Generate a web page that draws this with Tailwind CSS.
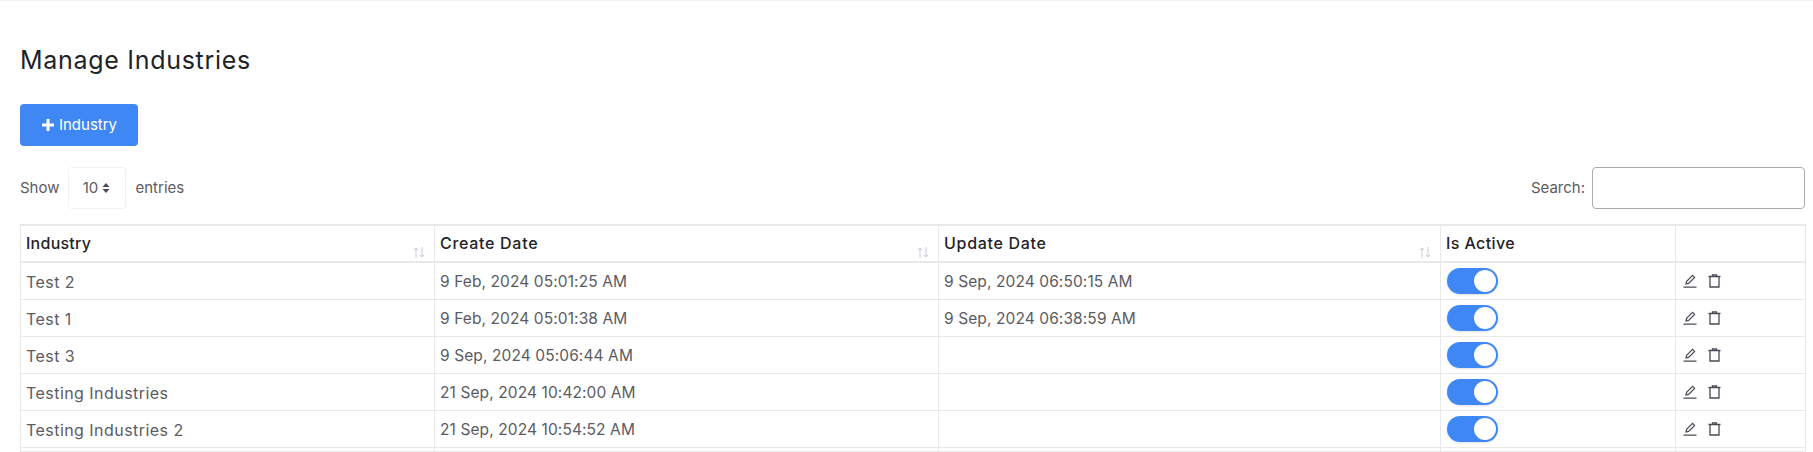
<!DOCTYPE html>
<html lang="en">
<head>
  <meta charset="UTF-8" />
  <title>Manage Industries</title>
  <script src="https://cdn.jsdelivr.net/npm/@tailwindcss/browser@4"></script>
</head>
<body class="bg-white h-[452px] overflow-hidden font-['Inter',sans-serif] text-[15px] text-[#5b5b63]">
  <div class="h-px bg-[#eef2f7]"></div>
  <div class="pl-5 pr-2">
    <!-- Title -->
    <h1 class="pt-[44px] h-[103px] text-[25px] leading-[30px] tracking-[0.7px] font-normal text-[#1f2328]">Manage Industries</h1>

    <button class="flex items-center justify-center gap-1 w-[118px] h-[42px] rounded bg-[#4087f6] text-white text-[15px]">
      <svg width="14" height="14" viewBox="0 0 14 14"><path d="M7 1v12M1 7h12" stroke="#fff" stroke-width="3"/></svg>
      Industry
    </button>

    <!-- Table controls -->
    <div class="flex justify-between items-center mt-[21px] h-[42px]">
      <div class="flex items-center">
        <span>Show</span>
        <div class="flex items-center justify-center gap-1 w-[58px] h-[42px] ml-[8px] mr-[10px] border border-[#eef2f7] rounded text-[15px]">
          10
          <svg width="8" height="10" viewBox="0 0 8 10"><path d="M4 0l3.5 4h-7zM4 10l3.5-4h-7z" fill="#4a4a52"/></svg>
        </div>
        <span>entries</span>
      </div>
      <div class="flex items-center">
        <span class="mr-[7px]">Search:</span>
        <input type="text" class="w-[213px] h-[42px] border border-[#aaaaaa] rounded bg-white" />
      </div>
    </div>

    <!-- Table -->
    <table class="mt-[15px] w-[1785px] table-fixed border-collapse border border-[#e9e9ea]">
      <colgroup>
        <col class="w-[414px]" /><col class="w-[504px]" /><col class="w-[502px]" /><col class="w-[235px]" /><col class="w-[130px]" />
      </colgroup>
      <thead>
        <tr class="h-[37px] text-[16px] text-[#1f2328] text-left">
          <th class="relative px-[5px] pb-[2px] tracking-[0.25px] font-medium border border-[#e9e9ea] border-t-2 border-b-2">Industry
            <svg class="absolute right-[9px] bottom-[3px]" width="12" height="11" viewBox="0 0 12 11"><path d="M3 11V1M1 3l2-2 2 2M9 0v10M7 8l2 2 2-2" stroke="#c5cad3" fill="none"/></svg>
          </th>
          <th class="relative px-[5px] pb-[2px] tracking-[0.7px] font-medium border border-[#e9e9ea] border-t-2 border-b-2">Create Date
            <svg class="absolute right-[9px] bottom-[3px]" width="12" height="11" viewBox="0 0 12 11"><path d="M3 11V1M1 3l2-2 2 2M9 0v10M7 8l2 2 2-2" stroke="#c5cad3" fill="none"/></svg>
          </th>
          <th class="relative px-[5px] pb-[2px] tracking-[0.7px] font-medium border border-[#e9e9ea] border-t-2 border-b-2">Update Date
            <svg class="absolute right-[9px] bottom-[3px]" width="12" height="11" viewBox="0 0 12 11"><path d="M3 11V1M1 3l2-2 2 2M9 0v10M7 8l2 2 2-2" stroke="#c5cad3" fill="none"/></svg>
          </th>
          <th class="px-[5px] pb-[2px] tracking-[0.4px] font-medium border border-[#e9e9ea] border-t-2 border-b-2">Is Active</th>
          <th class="border border-[#e9e9ea] border-t-2 border-b-2"></th>
        </tr>
      </thead>
      <tbody>
        <tr class="h-[37px]">
          <td class="px-[5px] pt-[2px] text-[16px] tracking-[0.45px] border border-[#e9e9ea]">Test 2</td>
          <td class="px-[5px] pt-[2px] text-[15.5px] tracking-[0.1px] border border-[#e9e9ea]">9 Feb, 2024 05:01:25 AM</td>
          <td class="px-[5px] pt-[2px] text-[15.5px] tracking-[0.1px] border border-[#e9e9ea]">9 Sep, 2024 06:50:15 AM</td>
          <td class="px-[6px] border border-[#e9e9ea]"><div class="flex justify-end items-center w-[51px] h-[26px] p-[2px] rounded-full bg-[#4087f6] shadow-sm"><div class="w-[22px] h-[22px] rounded-full bg-white"></div></div></td>
          <td class="px-[7px] border border-[#e9e9ea]"><div class="flex items-center gap-[11px]">
            <svg width="14" height="14" viewBox="0 0 14 14" fill="none" stroke="#4a4a55" stroke-width="1.2"><path d="M3 10l.6-2.6L9.6 1.4l2 2-6 6zM.5 13.2h13"/></svg>
            <svg width="13" height="14" viewBox="0 0 13 14" fill="none" stroke="#4a4a55" stroke-width="1.3"><path d="M.5 2.5h12M2 2.5V13h9V2.5M4.5 2.5V.8h4v1.7"/></svg>
          </div></td>
        </tr>
        <tr class="h-[37px]">
          <td class="px-[5px] pt-[2px] text-[16px] tracking-[0.45px] border border-[#e9e9ea]">Test 1</td>
          <td class="px-[5px] pt-[2px] text-[15.5px] tracking-[0.1px] border border-[#e9e9ea]">9 Feb, 2024 05:01:38 AM</td>
          <td class="px-[5px] pt-[2px] text-[15.5px] tracking-[0.1px] border border-[#e9e9ea]">9 Sep, 2024 06:38:59 AM</td>
          <td class="px-[6px] border border-[#e9e9ea]"><div class="flex justify-end items-center w-[51px] h-[26px] p-[2px] rounded-full bg-[#4087f6] shadow-sm"><div class="w-[22px] h-[22px] rounded-full bg-white"></div></div></td>
          <td class="px-[7px] border border-[#e9e9ea]"><div class="flex items-center gap-[11px]">
            <svg width="14" height="14" viewBox="0 0 14 14" fill="none" stroke="#4a4a55" stroke-width="1.2"><path d="M3 10l.6-2.6L9.6 1.4l2 2-6 6zM.5 13.2h13"/></svg>
            <svg width="13" height="14" viewBox="0 0 13 14" fill="none" stroke="#4a4a55" stroke-width="1.3"><path d="M.5 2.5h12M2 2.5V13h9V2.5M4.5 2.5V.8h4v1.7"/></svg>
          </div></td>
        </tr>
        <tr class="h-[37px]">
          <td class="px-[5px] pt-[2px] text-[16px] tracking-[0.45px] border border-[#e9e9ea]">Test 3</td>
          <td class="px-[5px] pt-[2px] text-[15.5px] tracking-[0.1px] border border-[#e9e9ea]">9 Sep, 2024 05:06:44 AM</td>
          <td class="px-[5px] border border-[#e9e9ea]"></td>
          <td class="px-[6px] border border-[#e9e9ea]"><div class="flex justify-end items-center w-[51px] h-[26px] p-[2px] rounded-full bg-[#4087f6] shadow-sm"><div class="w-[22px] h-[22px] rounded-full bg-white"></div></div></td>
          <td class="px-[7px] border border-[#e9e9ea]"><div class="flex items-center gap-[11px]">
            <svg width="14" height="14" viewBox="0 0 14 14" fill="none" stroke="#4a4a55" stroke-width="1.2"><path d="M3 10l.6-2.6L9.6 1.4l2 2-6 6zM.5 13.2h13"/></svg>
            <svg width="13" height="14" viewBox="0 0 13 14" fill="none" stroke="#4a4a55" stroke-width="1.3"><path d="M.5 2.5h12M2 2.5V13h9V2.5M4.5 2.5V.8h4v1.7"/></svg>
          </div></td>
        </tr>
        <tr class="h-[37px]">
          <td class="px-[5px] pt-[2px] text-[16px] tracking-[0.45px] border border-[#e9e9ea]">Testing Industries</td>
          <td class="px-[5px] pt-[2px] text-[15.5px] tracking-[0.1px] border border-[#e9e9ea]">21 Sep, 2024 10:42:00 AM</td>
          <td class="px-[5px] border border-[#e9e9ea]"></td>
          <td class="px-[6px] border border-[#e9e9ea]"><div class="flex justify-end items-center w-[51px] h-[26px] p-[2px] rounded-full bg-[#4087f6] shadow-sm"><div class="w-[22px] h-[22px] rounded-full bg-white"></div></div></td>
          <td class="px-[7px] border border-[#e9e9ea]"><div class="flex items-center gap-[11px]">
            <svg width="14" height="14" viewBox="0 0 14 14" fill="none" stroke="#4a4a55" stroke-width="1.2"><path d="M3 10l.6-2.6L9.6 1.4l2 2-6 6zM.5 13.2h13"/></svg>
            <svg width="13" height="14" viewBox="0 0 13 14" fill="none" stroke="#4a4a55" stroke-width="1.3"><path d="M.5 2.5h12M2 2.5V13h9V2.5M4.5 2.5V.8h4v1.7"/></svg>
          </div></td>
        </tr>
        <tr class="h-[37px]">
          <td class="px-[5px] pt-[2px] text-[16px] tracking-[0.45px] border border-[#e9e9ea]">Testing Industries 2</td>
          <td class="px-[5px] pt-[2px] text-[15.5px] tracking-[0.1px] border border-[#e9e9ea]">21 Sep, 2024 10:54:52 AM</td>
          <td class="px-[5px] border border-[#e9e9ea]"></td>
          <td class="px-[6px] border border-[#e9e9ea]"><div class="flex justify-end items-center w-[51px] h-[26px] p-[2px] rounded-full bg-[#4087f6] shadow-sm"><div class="w-[22px] h-[22px] rounded-full bg-white"></div></div></td>
          <td class="px-[7px] border border-[#e9e9ea]"><div class="flex items-center gap-[11px]">
            <svg width="14" height="14" viewBox="0 0 14 14" fill="none" stroke="#4a4a55" stroke-width="1.2"><path d="M3 10l.6-2.6L9.6 1.4l2 2-6 6zM.5 13.2h13"/></svg>
            <svg width="13" height="14" viewBox="0 0 13 14" fill="none" stroke="#4a4a55" stroke-width="1.3"><path d="M.5 2.5h12M2 2.5V13h9V2.5M4.5 2.5V.8h4v1.7"/></svg>
          </div></td>
        </tr>
        <tr class="h-[4px]">
          <td class="border border-[#e9e9ea] border-b-0"></td><td class="border border-[#e9e9ea] border-b-0"></td><td class="border border-[#e9e9ea] border-b-0"></td><td class="border border-[#e9e9ea] border-b-0"></td><td class="border border-[#e9e9ea] border-b-0"></td>
        </tr>
      </tbody>
    </table>
  </div>
</body>
</html>
